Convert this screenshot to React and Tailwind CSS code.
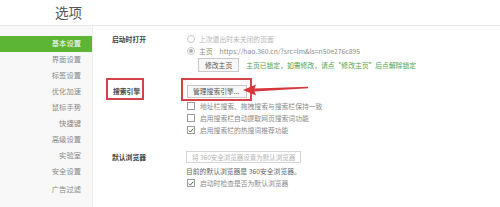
const navItems = ['基本设置', '界面设置', '标签设置', '优化加速', '鼠标手势', '快捷键', '高级设置', '实验室', '安全设置', '广告过滤'];

function Radio({ checked }) {
    return (
        <span className="w-[8px] h-[8px] rounded-full border border-[#c8c8c8] bg-white flex items-center justify-center shrink-0">
            {checked && <span className="w-[4px] h-[4px] rounded-full bg-[#b0b0b0]" />}
        </span>
    );
}

function Checkbox({ checked }) {
    return (
        <span className="w-[8px] h-[8px] border border-[#9a9a9a] bg-white flex items-center justify-center shrink-0">
            {checked && (
                <svg width="7" height="7" viewBox="0 0 7 7">
                    <path d="M1 3.6 L2.8 5.4 L6 1.4" stroke="#3c6e2e" strokeWidth="1.1" fill="none" />
                </svg>
            )}
        </span>
    );
}

export default function App() {
    return (
        <div
            className="w-[500px] h-[207px] bg-white overflow-hidden relative whitespace-nowrap"
            style={{ fontFamily: '"Noto Sans CJK SC", "Noto Sans", sans-serif' }}
        >
            <div className="h-[26px] border-b border-[#e8e8e8] flex items-center pl-[55px]">
                <span className="text-[13.5px] leading-none text-[#555]">选项</span>
            </div>

            <div className="flex h-[181px]">
                <div className="w-[93px] bg-[#f8f8f8] border-r border-[#ededed] pt-[10px]">
                    {navItems.map((item, i) => (
                        <div
                            key={item}
                            className={
                                'h-[16px] flex items-center justify-end pr-[11px] text-[7.3px] leading-none ' +
                                (i === 0 ? 'bg-[#5db535] text-white' : 'text-[#888]') +
                                (i === 9 ? ' mt-[2px]' : '')
                            }
                        >
                            {item}
                        </div>
                    ))}
                </div>

                <div className="flex-1 pl-[19px] pt-[7px] text-[6.8px] leading-none">
                    {/* 启动时打开 */}
                    <div className="flex">
                        <div className="w-[75px] h-[12px] flex items-center font-bold text-[#444]">启动时打开</div>
                        <div className="flex flex-col">
                            <div className="h-[12px] flex items-center gap-[4px] text-[#b4b4b4]">
                                <Radio />
                                <span>上次退出时未关闭的页面</span>
                            </div>
                            <div className="h-[12px] flex items-center gap-[4px] text-[#8a8a8a]">
                                <Radio checked />
                                <span>主页</span>
                                <span className="ml-[3px]">https://hao.360.cn/?src=lm&amp;ls=n50e276c895</span>
                            </div>
                            <div className="mt-[1px] pl-[11px] flex items-center gap-[7px]">
                                <span className="h-[14px] px-[6px] border border-[#c9c9c9] bg-[#f7f7f7] flex items-center text-[#555]">
                                    修改主页
                                </span>
                                <span className="text-[#4ba54b]">主页已锁定，如需修改，请点“修改主页”后点解除锁定</span>
                            </div>
                        </div>
                    </div>

                    {/* 搜索引擎 */}
                    <div className="flex mt-[13px]">
                        <div className="w-[75px] h-[13px] flex items-center font-bold text-[#444] relative">
                            <span className="ml-[1px]">搜索引擎</span>
                            <span className="absolute left-[-6px] top-[-7px] w-[38px] h-[22px] border-2 border-[#d4434a]" />
                        </div>
                        <div className="flex flex-col">
                            <div className="relative self-start">
                                <span className="h-[13px] w-[60px] border border-[#c9c9c9] bg-[#f7f7f7] flex items-center pl-[5px] text-[#555]">
                                    管理搜索引擎...
                                </span>
                                <span className="absolute left-[-6px] top-[-7px] w-[71px] h-[23px] border-2 border-[#d4434a]" />
                                <svg className="absolute left-[55px] top-[-3px]" width="70" height="16" viewBox="0 0 70 16">
                                    <polygon points="1,8 14,2.5 12.5,6.6 66,4.8 66,6.2 12.5,9.6 14,13.5" fill="#d9363c" />
                                </svg>
                            </div>
                            <div className="mt-[2px] h-[12px] flex items-center gap-[5px] text-[#8a8a8a]">
                                <Checkbox />
                                <span>地址栏搜索、拖拽搜索与搜索栏保持一致</span>
                            </div>
                            <div className="h-[12px] flex items-center gap-[5px] text-[#8a8a8a]">
                                <Checkbox />
                                <span>启用搜索栏自动提取网页搜索词功能</span>
                            </div>
                            <div className="h-[12px] flex items-center gap-[5px] text-[#8a8a8a]">
                                <Checkbox checked />
                                <span>启用搜索栏的热搜词推荐功能</span>
                            </div>
                        </div>
                    </div>

                    {/* 默认浏览器 */}
                    <div className="flex mt-[15px]">
                        <div className="w-[75px] h-[12px] flex items-center font-bold text-[#444]">默认浏览器</div>
                        <div className="flex flex-col -ml-[1px]">
                            <span className="h-[12px] w-[115px] border border-[#d6d6d6] bg-white flex items-center pl-[5px] text-[6.5px] text-[#b4b4b4]">
                                将 360安全浏览器设置为默认浏览器
                            </span>
                            <div className="mt-[2px] h-[12px] flex items-center text-[#666]">
                                目前的默认浏览器是 360安全浏览器。
                            </div>
                            <div className="h-[12px] flex items-center gap-[5px] pl-[1px] text-[#8a8a8a]">
                                <Checkbox checked />
                                <span>启动时检查是否为默认浏览器</span>
                            </div>
                        </div>
                    </div>
                </div>
            </div>
        </div>
    );
}
